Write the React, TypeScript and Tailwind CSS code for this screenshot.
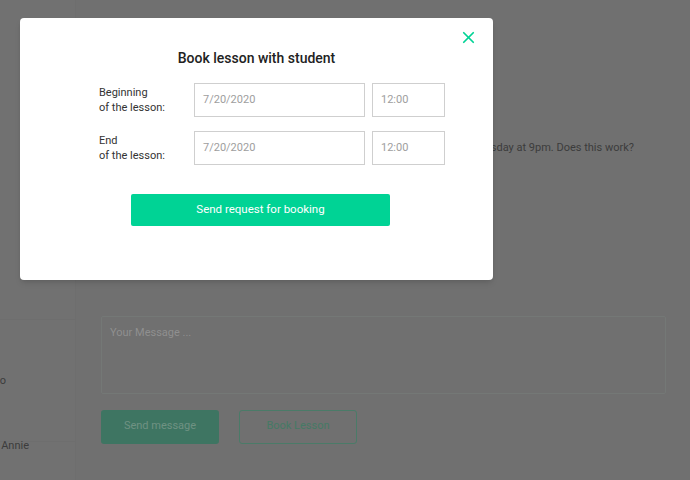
import { X } from 'lucide-react';

const inputCls =
  'h-[34px] border border-[#cfcfcf] px-2 text-[11px] text-[#9e9e9e] flex items-center bg-white';

function Row({ first, second }: { first: string; second: string }) {
  return (
    <div className="flex items-center">
      <div className="w-[95px] text-[11px] leading-[15px] text-[#333]">
        <div>{first}</div>
        <div>{second}</div>
      </div>
      <div className={`${inputCls} w-[171px]`}>7/20/2020</div>
      <div className={`${inputCls} w-[73px] ml-[7px]`}>12:00</div>
    </div>
  );
}

export default function App() {
  return (
    <div className="relative w-[690px] h-[480px] overflow-hidden bg-[#707070] font-['Roboto',sans-serif]">
      {/* dimmed chat page behind the dialog */}
      <div className="flex h-full">
        <div className="w-[76px] border-r border-[#6e6e6e] bg-[#717171] flex flex-col">
          <div className="h-[320px] border-b border-[#6e6e6e]" />
          <div className="h-[122px] flex items-center pt-[2px] border-b border-[#6e6e6e]">
            <div className="w-[6px] flex justify-end overflow-hidden whitespace-nowrap text-[11px] text-[#3c3c3c]">
              Hello
            </div>
          </div>
          <div className="h-[4px]" />
          <div className="h-[0px] flex items-center">
            <div className="w-[29px] flex justify-end overflow-hidden whitespace-nowrap text-[11px] text-[#3c3c3c]">
              Annie
            </div>
          </div>
        </div>
        <div className="flex-1 pl-[25px] pr-[24px] flex flex-col">
          <div className="h-[140px]" />
          <div className="flex justify-end pr-[32px] text-[11px] text-[#3c3c3c] whitespace-nowrap">
            Hi Annie, I can do a lesson on Wednesday at 9pm. Does this work?
          </div>
          <div className="h-[159px]" />
          <div className="h-[78px] border border-[#747876] rounded-[2px] px-2 pt-[8px] text-[11px] text-[#8f8f8f]">
            Your Message ...
          </div>
          <div className="flex gap-[20px] mt-[16px]">
            <div className="w-[118px] h-[34px] rounded-[3px] bg-[#3e7562] flex items-center justify-center text-[11px] text-[#6f9283]">
              Send message
            </div>
            <div className="w-[118px] h-[34px] rounded-[3px] border-[1.5px] border-[#4a7b68] flex items-center justify-center text-[11px] text-[#457a65]">
              Book Lesson
            </div>
          </div>
        </div>
      </div>

      {/* dialog */}
      <div className="absolute left-[20px] top-[18px] w-[473px] h-[262px] bg-white rounded-[4px] shadow-md">
        <button className="absolute right-[15px] top-[10px] text-[#00d395]">
          <X size={19} strokeWidth={2.2} />
        </button>
        <h2 className="pt-[30px] text-center text-[14px] font-medium text-[#222]">
          Book lesson with student
        </h2>
        <div className="ml-[79px] mt-[14px] flex flex-col gap-[14px]">
          <Row first="Beginning" second="of the lesson:" />
          <Row first="End" second="of the lesson:" />
        </div>
        <div className="mt-[29px] flex">
          <button className="ml-[111px] w-[259px] h-[32px] rounded-[2px] bg-[#00d395] text-white text-[11.5px]">
            Send request for booking
          </button>
        </div>
      </div>
    </div>
  );
}
